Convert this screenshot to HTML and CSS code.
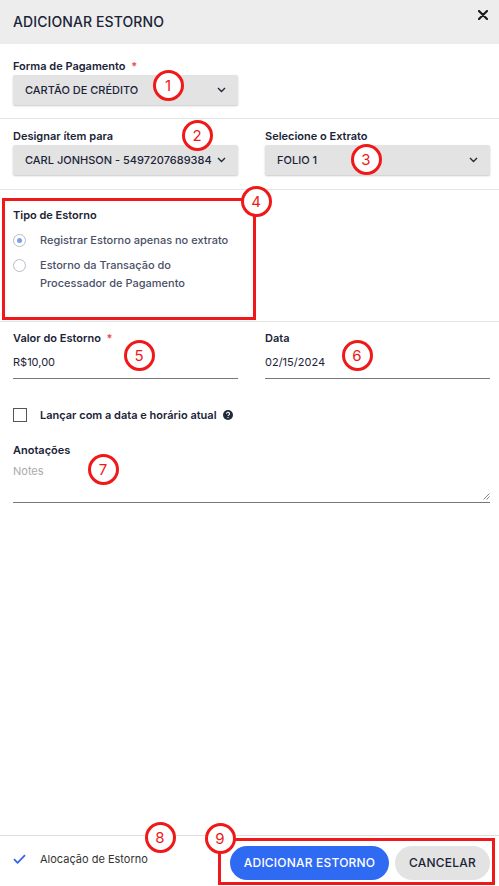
FILE: index.html
```html
<!DOCTYPE html>
<html lang="pt-BR">
<head>
    <meta charset="UTF-8">
    <meta name="viewport" content="width=device-width, initial-scale=1.0">
    <title>Adicionar Estorno</title>
    <link rel="stylesheet" href="styles.css">
</head>
<body>

<div class="modal">
    <div class="modal-header">
        <h3>ADICIONAR ESTORNO</h3>
        <svg class="close-icon" width="10" height="10" viewBox="0 0 10 10">
            <path d="M1 1L9 9M9 1L1 9" stroke="#1b1b1b" stroke-width="2.2" stroke-linecap="round"/>
        </svg>
    </div>

    <div class="section section-payment">
        <div class="field">
            <label>Forma de Pagamento <span class="required">*</span></label>
            <div class="select">
                <span>CARTÃO DE CRÉDITO</span>
                <svg class="chevron" width="9" height="6" viewBox="0 0 9 6"><path d="M1 1l3.5 3.5L8 1" fill="none" stroke="#222a3a" stroke-width="1.4"/></svg>
            </div>
        </div>
    </div>

    <div class="section section-assign">
        <div class="row">
            <div class="field">
                <label>Designar ítem para</label>
                <div class="select">
                    <span>CARL JONHSON - 5497207689384</span>
                    <svg class="chevron" width="9" height="6" viewBox="0 0 9 6"><path d="M1 1l3.5 3.5L8 1" fill="none" stroke="#222a3a" stroke-width="1.4"/></svg>
                </div>
            </div>
            <div class="field">
                <label>Selecione o Extrato</label>
                <div class="select">
                    <span>FOLIO 1</span>
                    <svg class="chevron" width="9" height="6" viewBox="0 0 9 6"><path d="M1 1l3.5 3.5L8 1" fill="none" stroke="#222a3a" stroke-width="1.4"/></svg>
                </div>
            </div>
        </div>
    </div>

    <div class="section section-type">
        <label>Tipo de Estorno</label>
        <div class="radio-option">
            <span class="radio checked"></span>
            <span>Registrar Estorno apenas no extrato</span>
        </div>
        <div class="radio-option">
            <span class="radio"></span>
            <span>Estorno da Transação do<br>Processador de Pagamento</span>
        </div>
    </div>

    <div class="section section-values">
        <div class="row">
            <div class="field">
                <label>Valor do Estorno <span class="required">*</span></label>
                <div class="input">R$10,00</div>
            </div>
            <div class="field">
                <label>Data</label>
                <div class="input">02/15/2024</div>
            </div>
        </div>

        <div class="checkbox-row">
            <span class="checkbox"></span>
            <span>Lançar com a data e horário atual</span>
            <svg class="help-icon" width="10" height="10" viewBox="0 0 10 10">
                <circle cx="5" cy="5" r="5" fill="#222a3a"/>
                <path d="M3.5 3.8a1.5 1.5 0 1 1 2.2 1.3c-.5.3-.7.5-.7 1" fill="none" stroke="#fff" stroke-width="1.1"/>
                <circle cx="5" cy="7.6" r=".7" fill="#fff"/>
            </svg>
        </div>

        <div class="field notes">
            <label>Anotações</label>
            <div class="textarea">
                <span class="placeholder">Notes</span>
                <svg class="grip" width="7" height="7" viewBox="0 0 7 7"><path d="M6.5 0.5L0.5 6.5M6.5 3.5L3.5 6.5" stroke="#777" stroke-width="0.9"/></svg>
            </div>
        </div>
    </div>

    <div class="modal-footer">
        <div class="allocation">
            <svg width="13" height="10" viewBox="0 0 13 10"><path d="M1 5.2l3.6 3.6L12 1.2" fill="none" stroke="#3066e6" stroke-width="1.8"/></svg>
            <span>Alocação de Estorno</span>
        </div>
        <div class="actions">
            <button class="btn-primary">ADICIONAR ESTORNO</button>
            <button class="btn-secondary">CANCELAR</button>
        </div>
    </div>
</div>

<!-- marcações -->
<div class="mark-box" style="left:2px; top:198px; width:254px; height:122px;"></div>
<div class="mark-box" style="left:218px; top:838px; width:277px; height:47px;"></div>
<div class="mark" style="left:168px; top:85px;">1</div>
<div class="mark" style="left:197px; top:135px;">2</div>
<div class="mark" style="left:366px; top:159px;">3</div>
<div class="mark" style="left:256px; top:201px;">4</div>
<div class="mark" style="left:139px; top:355px;">5</div>
<div class="mark" style="left:357px; top:355px;">6</div>
<div class="mark" style="left:103px; top:469px;">7</div>
<div class="mark" style="left:160px; top:837px;">8</div>
<div class="mark" style="left:220px; top:838px;">9</div>

</body>
</html>
```

FILE: styles.css
```css
body {
    font-family: Inter, "Noto Sans", sans-serif;
    margin: 0;
    color: #1b2437;
    position: relative;
    width: 499px;
    height: 886px;
    overflow: hidden;
}

.modal {
    display: flex;
    flex-direction: column;
    height: 886px;
}

.modal-header {
    height: 44px;
    background-color: #ededed;
    display: flex;
    justify-content: space-between;
    align-items: flex-start;
    padding: 0 11px 0 13px;
    box-sizing: border-box;
}

.modal-header h3 {
    margin: 13px 0 0;
    font-size: 14px;
    font-weight: 500;
    letter-spacing: 0.1px;
}

.close-icon {
    margin-top: 10px;
}

.section {
    border-bottom: 1px solid #e6e6e6;
}

.section label {
    display: block;
    font-size: 11px;
    font-weight: 600;
    line-height: 14px;
    margin-bottom: 2px;
}

.required {
    color: #e8474f;
    margin-left: 3px;
}

.section-payment {
    padding: 15px 13px 13px;
}

.section-payment .field {
    width: 225px;
}

.section-assign {
    padding: 10px 9px 14px 13px;
}

.row {
    display: grid;
    grid-template-columns: 225px 225px;
    column-gap: 27px;
}

.select {
    height: 30px;
    background-color: #e3e3e3;
    border-radius: 2px;
    box-shadow: 0 1px 2px rgba(0, 0, 0, 0.22);
    display: flex;
    align-items: center;
    justify-content: space-between;
    padding: 0 12px;
    font-size: 11px;
    font-weight: 500;
    white-space: nowrap;
}

.section-type {
    height: 132px;
    box-sizing: border-box;
    padding: 18px 13px 0;
}

.section-type label {
    margin-bottom: 9px;
}

.radio-option {
    display: flex;
    align-items: flex-start;
    gap: 14px;
    font-size: 11px;
    font-weight: 500;
    color: #4a5068;
    line-height: 18px;
    margin-bottom: 7px;
}

.radio {
    width: 11px;
    height: 11px;
    border: 1px solid #b9bcc4;
    border-radius: 50%;
    margin-top: 3px;
    flex-shrink: 0;
    position: relative;
    box-sizing: content-box;
}

.radio.checked::after {
    content: "";
    position: absolute;
    left: 3px;
    top: 3px;
    width: 5px;
    height: 5px;
    border-radius: 50%;
    background-color: #7f9cf2;
}

.section-values {
    flex: 1;
    border-bottom: none;
    padding: 9px 9px 0 13px;
}

.input {
    height: 31px;
    border-bottom: 1px solid #777;
    font-size: 11px;
    line-height: 31px;
    margin-top: 0;
}

.checkbox-row {
    display: flex;
    align-items: center;
    margin-top: 29px;
    font-size: 11px;
    font-weight: 600;
}

.checkbox {
    width: 12px;
    height: 12px;
    border: 1px solid #555;
    margin-right: 13px;
}

.help-icon {
    margin-left: 6px;
}

.notes {
    margin-top: 21px;
}

.textarea {
    position: relative;
    height: 44px;
    border-bottom: 1px solid #777;
    font-size: 11px;
    padding-top: 5px;
    box-sizing: border-box;
}

.placeholder {
    color: #aaa;
}

.grip {
    position: absolute;
    right: 0;
    bottom: 2px;
}

.modal-footer {
    height: 51px;
    border-top: 1px solid #dedede;
    box-sizing: border-box;
    display: flex;
    justify-content: space-between;
    align-items: center;
    padding: 0 9px 0 13px;
}

.allocation {
    display: flex;
    align-items: center;
    gap: 14px;
    font-size: 11px;
    color: #333;
    margin-top: -4px;
}

.actions {
    display: flex;
    gap: 6px;
    margin-top: 3px;
}

.actions button {
    height: 34px;
    border: none;
    border-radius: 17px;
    font-family: inherit;
    font-size: 12px;
    font-weight: 500;
    letter-spacing: 0.2px;
    cursor: pointer;
}

.btn-primary {
    width: 159px;
    background-color: #2f6af2;
    color: white;
}

.btn-secondary {
    width: 95px;
    background-color: #e3e3e3;
    color: #1b2437;
}

.mark-box {
    position: absolute;
    border: 3px solid #f01818;
    box-sizing: border-box;
}

.mark {
    position: absolute;
    width: 31px;
    height: 31px;
    margin: -15.5px 0 0 -15.5px;
    border: 3px solid #f01818;
    border-radius: 50%;
    box-sizing: border-box;
    background-color: white;
    color: #f01818;
    font-size: 15px;
    display: flex;
    align-items: center;
    justify-content: center;
}
```
